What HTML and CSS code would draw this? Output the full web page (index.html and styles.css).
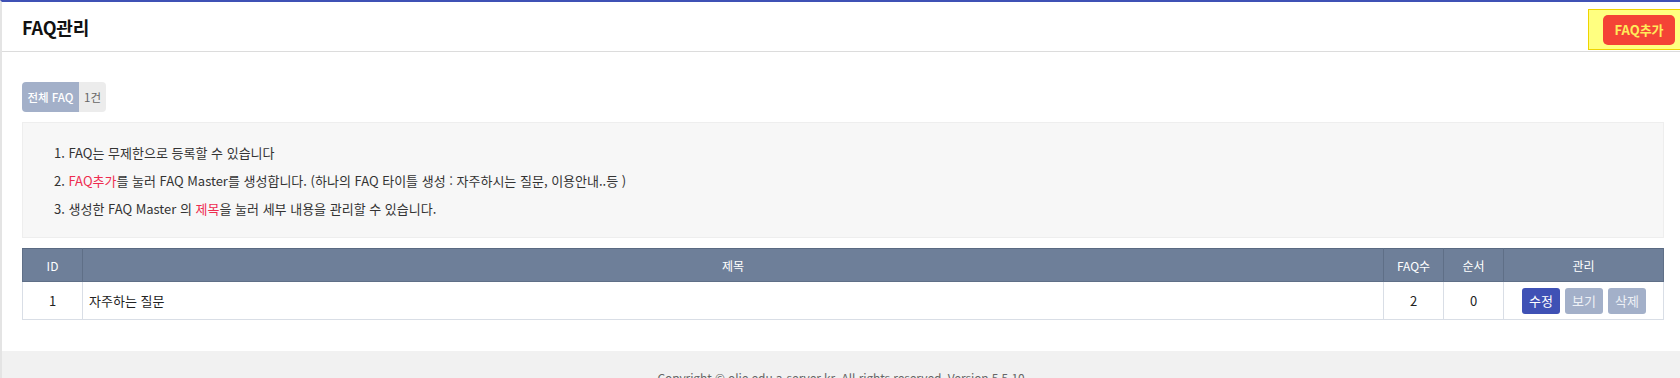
FILE: index.html
```html
<!DOCTYPE html>
<html lang="ko">
<head>
<meta charset="utf-8">
<title>FAQ관리</title>
<link rel="stylesheet" href="styles.css">
</head>
<body>
<div class="page">
  <header class="topbar">
    <h1 class="title">FAQ관리</h1>
    <div class="highlight">
      <button class="btn-add">FAQ추가</button>
    </div>
  </header>
  <main class="content">
    <div class="tab">
      <span class="tab-label">전체 FAQ</span>
      <span class="tab-count">1건</span>
    </div>
    <div class="info">
      <p>1. FAQ는 무제한으로 등록할 수 있습니다</p>
      <p>2. <span class="em">FAQ추가</span>를 눌러 FAQ Master를 생성합니다. (하나의 FAQ 타이틀 생성 : 자주하시는 질문, 이용안내..등 )</p>
      <p>3. 생성한 FAQ Master 의 <span class="em">제목</span>을 눌러 세부 내용을 관리할 수 있습니다.</p>
    </div>
    <table class="grid">
      <thead>
        <tr>
          <th class="c-id">ID</th>
          <th>제목</th>
          <th class="c-num">FAQ수</th>
          <th class="c-num">순서</th>
          <th class="c-mgmt">관리</th>
        </tr>
      </thead>
      <tbody>
        <tr>
          <td class="c-id">1</td>
          <td class="c-title">자주하는 질문</td>
          <td class="c-num">2</td>
          <td class="c-num">0</td>
          <td class="c-mgmt">
            <div class="actions">
              <button class="btn btn-edit">수정</button>
              <button class="btn btn-muted">보기</button>
              <button class="btn btn-muted">삭제</button>
            </div>
          </td>
        </tr>
      </tbody>
    </table>
  </main>
  <footer class="footer">Copyright © olie.edu.a-server.kr. All rights reserved. Version 5.5.10</footer>
</div>
</body>
</html>
```

FILE: styles.css
```css
* { box-sizing: border-box; }
html, body { margin: 0; padding: 0; background: #fff; }
body {
  font-family: "Noto Sans CJK KR", "Open Sans", sans-serif;
  color: #333;
  font-size: 12px;
}
.page {
  border-top: 2px solid #3f51b5;
  border-left: 2px solid #e4e4e4;
  min-height: 378px;
}
.topbar {
  height: 50px;
  display: flex;
  align-items: center;
  justify-content: space-between;
  border-bottom: 1px solid #dcdcdc;
  padding-left: 20px;
}
.title {
  margin: 0;
  font-size: 18px;
  font-weight: 700;
  color: #111;
  letter-spacing: -0.2px;
}
.highlight {
  align-self: flex-start;
  margin-top: 7px;
  width: 92px;
  height: 41px;
  background: #ffff80;
  border: 1px solid #eed400;
  border-right: none;
  display: flex;
  align-items: center;
  padding-left: 14px;
}
.btn-add {
  width: 72px;
  height: 30px;
  border: none;
  border-radius: 5px;
  background: #f44336;
  color: #ffeb5a;
  font-family: inherit;
  font-weight: 700;
  font-size: 13px;
  padding: 0;
}
.content {
  padding: 30px 16px 31px 20px;
}
.tab {
  display: inline-flex;
  height: 30px;
  border-radius: 4px;
  overflow: hidden;
  font-size: 11.5px;
}
.tab-label {
  background: #a3b0c9;
  color: #fff;
  width: 57px;
  display: flex;
  align-items: center;
  justify-content: center;
  font-weight: 500;
}
.tab-count {
  background: #ececec;
  color: #666;
  width: 27px;
  display: flex;
  align-items: center;
  justify-content: center;
}
.info {
  margin-top: 10px;
  background: #f7f7f7;
  border: 1px solid #eeeeee;
  height: 116px;
  padding: 18px 30px 0 31px;
}
.info p {
  margin: 0;
  height: 28px;
  line-height: 24px;
  font-size: 13px;
  color: #333;
}
.em { color: #ee2c4f; }
.grid {
  margin-top: 10px;
  width: 100%;
  border-collapse: collapse;
  table-layout: fixed;
}
.grid th {
  background: #6e7f99;
  color: #fff;
  font-weight: 400;
  font-size: 12px;
  height: 33px;
  border: 1px solid #5f6f87;
  border-top: 1px solid #5a6a82;
  text-align: center;
  padding: 0;
}
.grid td {
  height: 38px;
  border: 1px solid #d9dee6;
  text-align: center;
  font-size: 13px;
  color: #222;
  padding: 0;
}
.grid .c-id { width: 60px; }
.grid .c-num { width: 60px; }
.grid .c-mgmt { width: 160px; }
.grid td.c-title { text-align: left; padding-left: 6px; }
.actions {
  display: flex;
  justify-content: center;
  gap: 5px;
  padding-left: 1px;
}
.btn {
  width: 38px;
  height: 26px;
  border: none;
  border-radius: 3px;
  font-family: inherit;
  font-size: 13px;
  color: #fff;
  padding: 0;
}
.btn-edit { background: #3f51b5; }
.btn-muted { background: #a3b0c9; color: #eef1f6; }
.footer {
  background: #f1f1f1;
  text-align: center;
  font-size: 12px;
  letter-spacing: -0.1px;
  color: #666;
  padding-top: 18px;
  height: 60px;
}
```
